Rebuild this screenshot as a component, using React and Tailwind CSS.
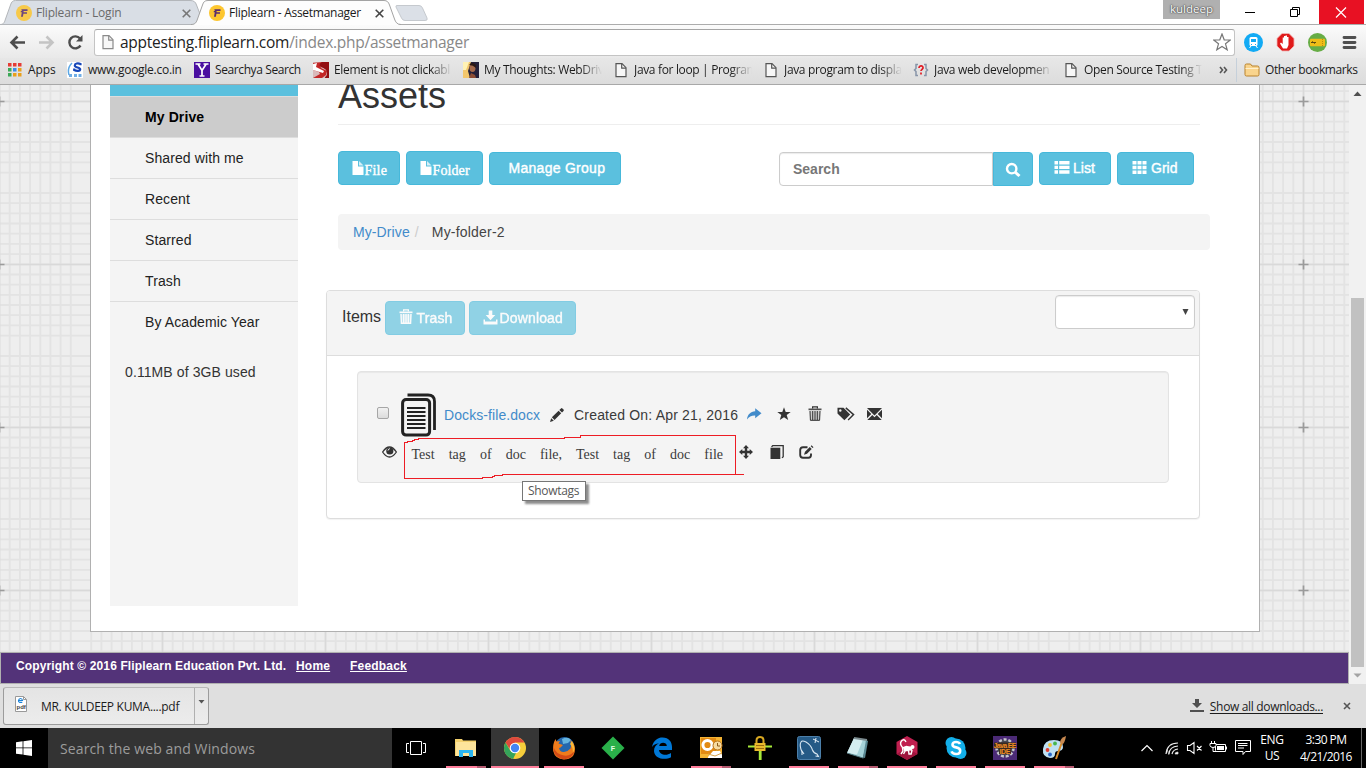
import React from "react";

/* ---------- browser chrome icons ---------- */

function Favicon({ className = "" }) {
  return (
    <svg className={"shrink-0 " + className} width="16" height="16" viewBox="0 0 16 16">
      <circle cx="8" cy="8" r="8" fill="#fdc62f" />
      <path d="M5.300 4.200h6.200v1.800H7.600v1.300H11v1.500H7.400l-.5 2.900H5l.8-4.400H4.600l.3-1.300h1z" fill="#5b2d6e" />
    </svg>
  );
}

function TabClose({ color = "#777" }) {
  return (
    <svg width="9" height="9" viewBox="0 0 9 9" className="shrink-0">
      <path d="M.7.7l7.600 7.600M8.300.7L.7 8.300" stroke={color} strokeWidth="1.600" />
    </svg>
  );
}

function PageIcon({ stroke = "#555" }) {
  return (
    <svg width="16" height="16" viewBox="0 0 16 16" className="shrink-0">
      <path d="M3 1.700h6l4 4v9H3z" fill="#f7f7f7" stroke={stroke} strokeWidth="1.200" />
      <path d="M8.700 1.700v4.400h4.300" fill="none" stroke={stroke} strokeWidth="1.200" />
    </svg>
  );
}

function TabStrip() {
  return (
    <div className="relative flex h-[25px] w-full items-start bg-white">
      <svg className="absolute left-0 top-0" width="1366" height="25" viewBox="0 0 1366 25">
        <path d="M0 24.5H1366" stroke="#acacac" />
        <path d="M0 24.5C4 24.5 4.500 22 5.500 19L10.500 5C11.500 2 12.500.5 15.500.5H190C194 .5 195.500 2 196.500 5L204 24.500z" fill="#d9dee5" stroke="#b3b6ba" />
        <path d="M191 25C195.500 24.500 196.500 22 197.500 19L202.500 5C203.500 2 204.500.5 208 .5H384C387 .5 388.500 2 389.500 5L394.500 19C395.500 22 397 24.500 401 25z" fill="#fdfdfd" />
        <path d="M191 24.500C195.500 24.500 196.500 22 197.500 19L202.500 5C203.500 2 204.500.5 208 .5H384C387 .5 388.500 2 389.500 5L394.500 19C395.500 22 397 24.500 401 24.500" fill="none" stroke="#a3a3a3" />
        <path d="M397 5.500H419Q421.500 5.500 422.500 8L427 18Q428 20.500 425 20.500H405Q402.500 20.500 401.500 18L396 7Q395.500 5.500 397 5.500z" fill="#dbe0e7" stroke="#c5c9ce" />
      </svg>
      <div className="relative flex h-6 w-[193px] items-center pl-4 pt-[2px]">
        <Favicon className="opacity-85" />
        <span className="ml-1 w-[146px] text-[12px] tracking-[-0.200px] text-[#6a6a6a]">Fliplearn - Login</span>
        <TabClose />
      </div>
      <div className="relative flex h-6 w-[200px] items-center pl-4 pt-[2px]">
        <Favicon />
        <span className="ml-1 w-[146px] text-[12px] tracking-[-0.270px] text-[#1a1a1a]">Fliplearn - Assetmanager</span>
        <TabClose color="#444" />
      </div>
      <div className="relative ml-auto flex h-6 items-start">
        <div className="mr-[10px] h-[19px] w-[57px] bg-[#b0b0b0] text-center text-[11.500px] leading-[17px] text-white [text-shadow:0_0_2px_#333,0_0_1px_#333]">
          kuldeep
        </div>
        <svg width="136" height="24" viewBox="0 0 136 24">
          <path d="M89 0h45v24H89z" fill="#e81123" />
          <path d="M15 12.500h10" stroke="#000" />
          <path d="M60.500 9.500h7v7h-7zM62.500 9.500v-2h7v7h-2" fill="none" stroke="#000" />
          <path d="M106 7.500l10 10M116 7.500l-10 10" stroke="#fff" strokeWidth="1.200" />
        </svg>
      </div>
    </div>
  );
}

function Toolbar() {
  return (
    <div className="flex h-[33px] w-full items-center bg-linear-to-b from-[#fbfbfb] to-[#e9e9e9]">
      <svg width="94" height="33" viewBox="0 0 94 33" className="shrink-0">
        <path d="M25 17.500H12M17.500 11.500l-6 6 6 6" fill="none" stroke="#4d4d4d" strokeWidth="2.600" />
        <path d="M39 17.500h13M46.500 11.500l6 6-6 6" fill="none" stroke="#c4c4c4" strokeWidth="2.600" />
        <path d="M80.500 20.500a6 6 0 1 1-.5-7" fill="none" stroke="#4d4d4d" strokeWidth="2.400" />
        <path d="M82.500 10v6.500H76z" fill="#4d4d4d" />
      </svg>
      <div className="mt-px flex h-[27px] w-[1141px] items-center rounded-[3px] border border-[#c4c4c4] border-t-[#a5a5a5] bg-white pl-[5px] pr-1">
        <PageIcon stroke="#8a8a8a" />
        <span className="ml-1 pt-px text-[15.500px] tracking-[-0.260px] text-[#222]">
          apptesting.fliplearn.com<span className="text-[#888]">/index.php/assetmanager</span>
        </span>
        <svg className="ml-auto mr-[-1px]" width="18" height="18" viewBox="0 0 18 18">
          <path d="M9 1l2.200 5.800 6.100.2-4.800 3.800 1.700 6L9 13.400l-5.200 3.400 1.700-6L.7 7l6.100-.2z" fill="#fff" stroke="#777" strokeWidth="1.200" />
        </svg>
      </div>
      <svg width="131" height="33" viewBox="0 0 131 33" className="shrink-0">
        <circle cx="18.500" cy="17.500" r="9.500" fill="#12aaf4" />
        <rect x="14.500" y="12" width="8" height="9" rx="1.500" fill="#fff" />
        <path d="M16 14h5v3h-5z" fill="#12aaf4" />
        <path d="M16 19.500h1M20 19.500h1" stroke="#12aaf4" />
        <path d="M16 21l-1.500 2M21 21l1.500 2" stroke="#fff" />
        <path d="M47 8.500h7l5 5v7.500l-5 5h-7l-5-5v-7.500z" fill="#e01b1b" stroke="#f3b5b5" strokeWidth=".8" />
        <path d="M48 23.500l-3-5 1-1 1.700 1.500V12.500h1.300V17v-6h1.500v6-6.500h1.500V17v-5h1.500v8l-1.500 3.500z" fill="#fff" />
        <circle cx="82.500" cy="17.500" r="9.500" fill="#67ad46" />
        <rect x="75" y="13.800" width="15" height="7.500" rx="1" fill="#f0bd17" />
        <path d="M76 17.500h5M77 16.500l3 2" stroke="#5a4a10" />
        <path d="M87.500 14v7" stroke="#b88d10" strokeDasharray="1 1" />
        <path d="M109 12.500h11M109 17.500h11M109 22.500h11" stroke="#505050" strokeWidth="2.800" strokeLinecap="round" />
      </svg>
    </div>
  );
}

function Bookmark({ icon, label, className }) {
  return (
    <div className={"flex shrink-0 items-center " + className}>
      {icon}
      <span className="ml-[5px] w-[118px] whitespace-nowrap [mask-image:linear-gradient(to_right,black_82%,transparent_100%)]">{label}</span>
    </div>
  );
}

function BookmarksBar() {
  const cols = ["#e53c35", "#e53c35", "#e53c35", "#3ba856", "#3b8de8", "#e9a01b", "#3ba856", "#e9a01b", "#e9a01b"];
  return (
    <div className="flex h-[27px] w-full items-center border-b border-[#a8a8a8] bg-linear-to-b from-[#e7e7e7] to-[#dcdcdc] pb-[2px] text-[12px] tracking-[-0.340px] text-[#1c1c1c]">
      <svg width="14" height="14" viewBox="0 0 14 14" className="ml-2 shrink-0">
        {cols.map((c, i) => (
          <rect key={i} x={(i % 3) * 5} y={Math.floor(i / 3) * 5} width="3.500" height="3.500" fill={c} />
        ))}
      </svg>
      <span className="ml-[6px] w-[39px] shrink-0 tracking-[-0.100px]">Apps</span>
      <div className="flex w-[127px] shrink-0 items-center">
        <svg width="16" height="16" viewBox="0 0 16 16" className="shrink-0">
          <path d="M0 0h16v16H0z" fill="#fff" />
          <path d="M5 1C2 4 .5 8 2 13" fill="none" stroke="#5ba7e5" strokeWidth="1.500" />
          <path d="M13.500 3.200V2C11 .8 7.800 1.400 7.800 3.500c0 2.500 5.400 1.600 5.400 3.800 0 2-3.700 2-6 .7V6.500" fill="none" stroke="#1646b8" strokeWidth="2.200" />
          <path d="M2 12h3v3H2zM7 12h3v3H7zM11.500 12h3v3h-3z" fill="#70aee6" />
        </svg>
        <span className="ml-[5px] whitespace-nowrap tracking-[-0.270px]">www.google.co.in</span>
      </div>
      <div className="flex w-[119px] shrink-0 items-center">
        <svg width="16" height="16" viewBox="0 0 16 16" className="shrink-0">
          <path d="M0 0h16v16H0z" fill="#4a0fa0" />
          <path d="M1.500 2h5M9.500 2h5M4 2l4 6.500L12.200 2M8 8v5.500M5.500 14h5" fill="none" stroke="#fff" strokeWidth="1.700" />
        </svg>
        <span className="ml-[5px] whitespace-nowrap tracking-[-0.400px]">Searchya Search</span>
      </div>
      <Bookmark
        className="w-[150px]"
        label="Element is not clickabl"
        icon={
          <svg width="16" height="16" viewBox="0 0 16 16" className="shrink-0">
            <path d="M0 0h16v16H0z" fill="#d9b9b9" />
            <path d="M0 1l10-1-3 3 1 3 6 3-1 4-4 3H0l7-4-1-2-6-2z" fill="#c32626" />
            <path d="M16 0H9C6 2 6 4 8 5s6 2 6 6-2 3-2 5h4z" fill="#930f12" />
            <path d="M0 2l4-1-1 4 8 4-1 2-10-3z" fill="#fff" />
          </svg>
        }
      />
      <Bookmark
        className="w-[150px]"
        label="My Thoughts: WebDriv"
        icon={
          <svg width="16" height="16" viewBox="0 0 16 16" className="shrink-0">
            <path d="M0 0h16v16H0z" fill="#24203a" />
            <path d="M0 0h8L5 9l2 7H0z" fill="#f2c66c" />
            <path d="M0 0h6L3 8H0z" fill="#fff2b5" />
            <ellipse cx="9.500" cy="6" rx="3" ry="4" fill="#a66a4c" />
            <path d="M6 3q3-4 7 0v3q-3-3-7-3z" fill="#2a1715" />
            <path d="M6 16l2-5 4 2 1 3z" fill="#8d4d35" />
          </svg>
        }
      />
      <Bookmark className="w-[150px]" label="Java for loop | Program" icon={<PageIcon />} />
      <Bookmark className="w-[150px]" label="Java program to displa" icon={<PageIcon />} />
      <Bookmark
        className="w-[150px]"
        label="Java web developmen"
        icon={
          <svg width="16" height="16" viewBox="0 0 16 16" className="shrink-0">
            <path d="M5 2.500H3v4L1.500 8 3 9.500v4h2M11 2.500h2v4L14.500 8 13 9.500v4h-2" fill="none" stroke="#8794a8" strokeWidth="1.500" />
            <path d="M6 6c0-3 4.500-2.500 4 0-.2 1.200-2 1.500-2 3M8 10.500v2" fill="none" stroke="#e01b24" strokeWidth="1.700" />
          </svg>
        }
      />
      <Bookmark className="w-[155px]" label="Open Source Testing T" icon={<PageIcon />} />
      <svg width="18" height="16" viewBox="0 0 18 16" className="shrink-0">
        <path d="M2 5l2.500 3L2 11M6 5l2.500 3L6 11" fill="none" stroke="#555" strokeWidth="1.600" />
      </svg>
      <div className="h-6 w-px bg-[#c6d0da]" />
      <svg width="16" height="16" viewBox="0 0 16 16" className="ml-[7px] shrink-0">
        <path d="M1 3.500q0-1.500 1.500-1.500h4L8 4h5.500Q15 4 15 5.500v7q0 1.500-1.500 1.500h-11Q1 14 1 12.500z" fill="#f9d48d" stroke="#b9822c" />
        <path d="M1.500 6.500h13" stroke="#fff0cc" />
      </svg>
      <span className="ml-[5px] whitespace-nowrap tracking-[-0.400px]">Other bookmarks</span>
    </div>
  );
}

/* ---------- page ---------- */

function PaperBackground() {
  const minor = Array.from({ length: 15 }, (_, i) => (i + 1) * 10.1875);
  return (
    <svg className="absolute left-0 top-0" width="1349" height="567" viewBox="0 0 1349 567">
      <defs>
        <pattern id="paper" width="163" height="163" patternUnits="userSpaceOnUse" x="-82" y="-66">
          <path d="M0 0h163v163H0z" fill="#eeeeee" />
          {minor.map((p) => (
            <path key={p} d={`M0 ${(p + 0.8).toFixed(1)}H163M${p.toFixed(1)} 0V163`} stroke="#e3e3e3" strokeWidth="1.800" />
          ))}
          <path d="M81.500 0V163M0 82.500H163" stroke="#d9d9d9" strokeWidth="1.500" />
          <path d="M81.500 77.500v10M76.500 82.500h10" stroke="#9b9b9b" strokeWidth="1.700" />
        </pattern>
      </defs>
      <path d="M0 0h1349v567H0z" fill="url(#paper)" />
    </svg>
  );
}

function Sidebar() {
  const items = ["Shared with me", "Recent", "Starred", "Trash"];
  return (
    <nav className="flex h-[521px] w-[188px] shrink-0 flex-col bg-[#f4f4f4] text-[14px] tracking-[0.100px] text-[#222]">
      <div className="h-3 border-b border-[#ddd] bg-[#5bc0de]" />
      <div className="flex h-[41px] items-center border-b border-[#ddd] bg-[#ccc] pl-[35px] font-bold text-black">My Drive</div>
      {items.map((t) => (
        <div key={t} className="flex h-[41px] items-center border-b border-[#ddd] pl-[35px]">{t}</div>
      ))}
      <div className="flex h-[41px] items-center pl-[35px]">By Academic Year</div>
      <div className="mt-[19px] pl-[15px] leading-5 text-[#333]">0.11MB of 3GB used</div>
    </nav>
  );
}

const btn = "flex shrink-0 items-center rounded-[4px] border border-[#46b8da] bg-[#5bc0de] text-[14px] text-white [-webkit-text-stroke:0.400px_white] ";

function FileGlyph() {
  return (
    <svg width="12" height="14" viewBox="0 0 12 14" className="mt-[-1px] shrink-0">
      <path d="M.5 0H6v5.500h5.500V14H.5z" fill="#fff" />
      <path d="M7 0l4.500 4.500H7z" fill="#fff" opacity=".75" />
    </svg>
  );
}

function ActionRow() {
  return (
    <div className="ml-3 mt-[26px] flex h-[35px] items-end">
      <button className={btn + "h-[34px] w-[62px] self-start pl-[13px] font-['Liberation_Serif',serif] pt-px"}>
        <FileGlyph />
        <span className="ml-[0.500px] mt-1 tracking-[0.200px]">File</span>
      </button>
      <button className={btn + "ml-[6px] h-[34px] w-[77px] self-start pl-[13px] font-['Liberation_Serif',serif] pt-px"}>
        <FileGlyph />
        <span className="ml-[0.500px] mt-1 tracking-[0.100px]">Folder</span>
      </button>
      <button className={btn + "mb-px ml-[6px] h-[33px] w-[132px] pl-[18.500px] tracking-[0.280px]"}>Manage Group</button>
      <div className="ml-[158px] flex h-[34px] w-[214px] items-center rounded-l-[4px] border border-[#ccc] bg-white pl-[13px] text-[14px] font-bold text-[#777] shadow-[inset_0_1px_1px_rgba(0,0,0,0.080)]">
        Search
      </div>
      <button className="flex h-[34px] w-10 items-center justify-center rounded-r-[4px] border border-[#46b8da] bg-[#5bc0de] pr-px pt-px">
        <svg width="16" height="16" viewBox="0 0 16 16">
          <circle cx="6.700" cy="6.700" r="4.700" fill="none" stroke="#fff" strokeWidth="2.400" />
          <path d="M10 10l4.500 4" stroke="#fff" strokeWidth="3" />
        </svg>
      </button>
      <button className={btn + "mb-px ml-[6px] h-[33px] w-[72px] pl-[14px]"}>
        <svg width="16" height="13" viewBox="0 0 16 13" className="mr-[3px] mt-[-2px] shrink-0">
          <path d="M.5 0H4v3.500H.5zM.5 4.700H4v3.300H.5zM.5 9.200H4v3.500H.5zM5.200 0h10.300v3.500H5.200zM5.200 4.700h10.300v3.300H5.200zM5.200 9.200h10.300v3.500H5.200z" fill="#fff" />
        </svg>
        List
      </button>
      <button className={btn + "mb-px ml-[6px] h-[33px] w-[77px] pl-[14px]"}>
        <svg width="15" height="13" viewBox="0 0 15 13" className="mr-1 mt-[-2px] shrink-0">
          <path d="M.5 0h4v3.600h-4zM5.500 0h4v3.600h-4zM10.500 0h4v3.600h-4zM.5 4.700h4v3.600h-4zM5.500 4.700h4v3.600h-4zM10.500 4.700h4v3.600h-4zM.5 9.400h4V13h-4zM5.500 9.400h4V13h-4zM10.500 9.400h4V13h-4z" fill="#fff" />
        </svg>
        Grid
      </button>
    </div>
  );
}

function TrashGlyph({ color = "#333", bold = false }) {
  return (
    <svg width="14" height="15" viewBox="0 0 14 15" className="shrink-0">
      <path d="M4.600 2.500V.8h4.800v1.700" fill="none" stroke={color} strokeWidth="1.200" />
      <path d="M.5 2.500h13v1.700H.5z" fill={color} opacity={bold ? 1 : 0.85} />
      <path d="M1.700 5.200h10.600l-.5 9.500H2.200z" fill={color} opacity={bold ? 0.45 : 0.2} />
      <path d="M2 5l.4 9.300h9.200L12 5M4.700 5v9M7 5v9M9.300 5v9" fill="none" stroke={color} strokeWidth={bold ? 1.4 : 1} />
    </svg>
  );
}

function ItemCard() {
  return (
    <div className="relative mx-[30px] mt-[15px] h-[112px] rounded-[4px] border border-[#e3e3e3] bg-[#f4f4f4] text-[14px] text-[#3a3a3a] shadow-[inset_0_1px_1px_rgba(0,0,0,0.050)]">
      <div className="mt-[20px] flex h-[46px] items-center pl-[19px]">
        <span className="mt-[-4px] h-3 w-3 shrink-0 rounded-[2px] border border-[#a6a6a6] bg-linear-to-b from-[#f1f1f1] to-[#dcdcdc]" />
        <svg width="36" height="44" viewBox="0 0 36 44" className="ml-3 shrink-0">
          <path d="M6.500 2H27Q33.500 2 33.500 8.500V37" fill="none" stroke="#222" strokeWidth="2.800" />
          <rect x="1.600" y="6.600" width="27" height="35.500" rx="3.500" fill="#f4f4f4" stroke="#222" strokeWidth="3" />
          <path d="M6 15h18.500M6 19h18.500M6 23h18.500M6 27h18.500M6 31h18.500M6 35h18.500" stroke="#222" strokeWidth="1.900" />
        </svg>
        <a className="ml-[7px] w-[105px] shrink-0 tracking-[0.080px] text-[#428bca]">Docks-file.docx</a>
        <svg width="16" height="15" viewBox="0 0 16 15" className="shrink-0">
          <path d="M1 14l1.200-3.800 2.600 2.600zM2.900 9.300l6.700-6.600 2.600 2.600-6.700 6.700zM10.300 2L12 .4q.7-.6 1.400 0l1.100 1.200q.7.700 0 1.400L13 4.600z" fill="#333" />
        </svg>
        <span className="ml-[9px] w-[173px] shrink-0 tracking-[0.190px]">Created On: Apr 21, 2016</span>
        <div className="mt-[-3px] flex items-center">
          <svg width="16" height="14" viewBox="0 0 16 14" className="ml-[-1px]">
            <path d="M9.200 1.200L15.500 6.200 9.200 11.200V8.400C5.500 8.300 3 9.300 1 12.400 1.400 7.500 4.500 4.500 9.200 4.200z" fill="#428bca" />
          </svg>
          <svg width="14" height="14" viewBox="0 0 14 14" className="ml-[15px]">
            <path d="M7 .3l1.700 4.800h5l-4 3 1.500 5L7 10.200 2.800 13.100l1.500-5-4-3h5z" fill="#333" />
          </svg>
          <span className="ml-[17px]"><TrashGlyph /></span>
          <svg width="18" height="14" viewBox="0 0 18 14" className="ml-[15px]">
            <path d="M.5.8h6L13.200 7.500 7.400 13.300.5 6.500z" fill="#333" />
            <circle cx="3.300" cy="3.500" r="1.200" fill="#f4f4f4" />
            <path d="M8.800.9l7.800 6.700-5.500 5.500" fill="none" stroke="#333" strokeWidth="1.400" />
          </svg>
          <svg width="15" height="12" viewBox="0 0 15 12" className="ml-[12px]">
            <path d="M0 0h15L7.500 7.500zM0 1.700L4.300 6 0 10.300zM15 1.700L10.700 6 15 10.300zM5.300 7l2.200 2.200L9.700 7l5 5H.3z" fill="#333" />
          </svg>
        </div>
      </div>
      <div className="flex h-[34px] items-center pl-[24px]">
        <svg width="15" height="12" viewBox="0 0 15 12" className="mt-[-7px] shrink-0">
          <path d="M.6 6Q4 1 7.500 1T14.400 6Q11 11 7.500 11T.6 6z" fill="none" stroke="#333" strokeWidth="1.300" />
          <circle cx="7.800" cy="5" r="3.600" fill="#333" />
          <path d="M6 4.500q.2-1.600 1.800-1.800" fill="none" stroke="#fff" />
        </svg>
        <p className="ml-[14.500px] mt-[-1px] w-[311.500px] shrink-0 font-['Liberation_Serif',serif] [text-align-last:justify]">
          Test tag of doc file, Test tag of doc file
        </p>
        <div className="mt-[-7px] flex items-center">
          <svg width="14" height="14" viewBox="0 0 14 14" className="ml-4">
            <path d="M7 0l3 3.300H8.200v2.500h2.500V4L14 7l-3.300 3V8.200H8.200v2.500H10L7 14l-3-3.300h1.800V8.200H3.300V10L0 7l3.300-3v1.800h2.500V3.300H4z" fill="#333" />
          </svg>
          <svg width="14" height="14" viewBox="0 0 14 14" className="ml-[17px]">
            <path d="M.5 2.700h9.800V14H.5z" fill="#333" />
            <path d="M1.500 1.900L2.700.7h10.500v11l-1.200 1.200" fill="none" stroke="#333" strokeWidth="1.300" />
          </svg>
          <svg width="15" height="14" viewBox="0 0 15 14" className="ml-[15px]">
            <path d="M8.500 2.200H4Q1.200 2.200 1.200 5v5q0 2.700 2.800 2.700h5.500q2.500 0 2.500-2.700V8.500" fill="none" stroke="#333" strokeWidth="1.900" />
            <path d="M5 9.700L6 6.800l4.800-4.700 1.900 1.900L8 8.700zM11.700 1.200l.9-.9 1.900 1.900-.9.900z" fill="#333" />
          </svg>
        </div>
      </div>
      <svg className="absolute left-[46px] top-[62px]" width="342" height="48" viewBox="404 434 342 48" shapeRendering="crispEdges">
        <path d="M404.500 478.500V442.500H407.500V441.500H412.500V440.500H414.500V439.500H418.500V438.500H564.500V437.500H580.500V435.500H735.500V474.500M404 478.500H482.500V477.500H492.500V476.500H494.500V475.500H502.500V474.500H744" fill="none" stroke="#ed1c24" />
      </svg>
      <div className="absolute left-[164px] top-[109px] h-5 w-16 border border-[#767676] bg-white pl-[5px] font-['Open_Sans',sans-serif] text-[12px] leading-[18px] tracking-[-0.320px] text-[#575757] shadow-[3px_3px_2px_rgba(0,0,0,0.450)]">
        Showtags
      </div>
    </div>
  );
}

function ItemsPanel() {
  return (
    <section className="mt-10 h-[229px] w-[874px] rounded-[4px] border border-[#ddd] bg-white shadow-[0_1px_1px_rgba(0,0,0,0.050)]">
      <header className="flex h-[65px] items-start rounded-t-[3px] border-b border-[#ddd] bg-[#f4f4f4] pl-[15px]">
        <span className="mt-[14px] w-[43px] text-[16px] leading-6 text-[#333]">Items</span>
        <button className={btn + "mt-[10px] h-[34px] w-20 pl-[12.500px] opacity-65"}>
          <span className="mt-[-3px]"><TrashGlyph color="#fff" bold /></span>
          <span className="ml-[4px] tracking-[0.150px]">Trash</span>
        </button>
        <button className={btn + "ml-1 mt-[10px] h-[34px] w-[107px] pl-[13px] opacity-65"}>
          <svg width="15" height="15" viewBox="0 0 15 15" className="mt-[-2px] shrink-0">
            <path d="M5.700.5h3.600V5h3L7.500 10.200 2.700 5h3z" fill="#fff" />
            <path d="M.5 9.500H2v2h11v-2h1.500v5H.5z" fill="#fff" />
          </svg>
          <span className="ml-[1.500px] tracking-[0.150px]">Download</span>
        </button>
        <div className="ml-auto mr-1 mt-1 flex h-[34px] w-[140px] items-center justify-end rounded-[4px] border border-[#ccc] bg-white pr-[5px] shadow-[inset_0_1px_1px_rgba(0,0,0,0.080)]">
          <svg width="7" height="6" viewBox="0 0 7 6">
            <path d="M.5 0h6l-3 6z" fill="#444" />
          </svg>
        </div>
      </header>
      <ItemCard />
    </section>
  );
}

function Page() {
  return (
    <div className="relative flex h-[599px] w-[1349px] flex-col overflow-hidden bg-[#eee] font-['Liberation_Sans',Arial,sans-serif]">
      <PaperBackground />
      <main className="relative ml-[90px] flex h-[547px] w-[1170px] shrink-0 overflow-hidden border border-t-0 border-[#b0b0b0] bg-white pl-[19px]">
        <Sidebar />
        <div className="flex flex-1 flex-col pl-7">
          <div className="ml-3 h-10 w-[862px] border-b border-[#eee]">
            <h1 className="mt-[-7px] text-[36px] leading-9 text-[#333]">Assets</h1>
          </div>
          <ActionRow />
          <div className="ml-3 mt-7 flex h-9 w-[872px] items-center rounded-[4px] bg-[#f4f4f4] pl-[15px] text-[14px] tracking-[0.100px] text-[#444]">
            <a className="text-[#428bca]">My-Drive</a>
            <span className="ml-[5px] text-[#ccc]">/</span>
            <span className="ml-[13px] tracking-[0.200px]">My-folder-2</span>
          </div>
          <ItemsPanel />
        </div>
      </main>
      <footer className="relative mt-5 flex h-8 items-start border border-[#b0b0b0] bg-[#533379] pl-[15px] pt-[5px] text-[12px] font-bold leading-[16px] text-white">
        <span className="w-[280px] tracking-[0.130px]">Copyright © 2016 Fliplearn Education Pvt. Ltd.</span>
        <a className="w-[54px] tracking-[0.200px] underline">Home</a>
        <a className="tracking-[0.200px] underline">Feedback</a>
      </footer>
    </div>
  );
}

function Scrollbar() {
  return (
    <div className="flex h-[599px] w-[17px] flex-col items-center bg-[#f1f1f1]">
      <svg width="17" height="17" viewBox="0 0 17 17">
        <path d="M8.500 6.500l4 4.500h-8z" fill="#505050" />
      </svg>
      <div className="mt-[196px] h-[369px] w-[13px] bg-[#c1c1c1]" />
      <svg width="17" height="17" viewBox="0 0 17 17">
        <path d="M8.500 10.500l4-4h-8z" fill="#a3a3a3" />
      </svg>
    </div>
  );
}

function DownloadBar() {
  return (
    <div className="flex h-11 w-full items-start bg-[#dfdfdf] text-[12px] text-[#1c1c1c]">
      <div className="ml-[3px] mt-[3px] flex h-[38px] w-[206px] rounded-[3px] border border-[#9c9c9c] border-t-[#b8b8b8] bg-linear-to-b from-[#e4e4e4] to-[#ececec]">
        <div className="flex flex-1 items-center border-r border-[#b0b0b0] pl-[9px]">
          <svg width="16" height="16" viewBox="0 0 16 16" className="mt-[-4px] shrink-0">
            <path d="M2.500.5h8l3 3v12h-11z" fill="#fff" stroke="#999" />
            <path d="M10.500.5v3h3" fill="none" stroke="#999" />
            <path d="M5.500 4.500h4q-.3-2-2-2t-2 2.200 3.800 1.600" fill="none" stroke="#1b83d8" strokeWidth="1.200" />
            <text x="3.500" y="13" fontSize="6" fontWeight="700" fill="#444" fontFamily="Liberation Sans">pdf</text>
          </svg>
          <span className="ml-3 mt-px whitespace-nowrap tracking-[-0.300px]">MR. KULDEEP KUMA....pdf</span>
        </div>
        <svg width="13" height="36" viewBox="0 0 13 36">
          <path d="M3.500 12h6l-3 3.500z" fill="#555" />
        </svg>
      </div>
      <div className="ml-auto flex h-11 items-center pr-[15px]">
        <svg width="14" height="14" viewBox="0 0 14 14">
          <path d="M5 0h4v4h3L7 9 2 4h3zM0 11h14v2H0z" fill="#505050" />
        </svg>
        <span className="ml-[6px] mr-[20px] mt-px tracking-[-0.330px] underline decoration-1 underline-offset-2">Show all downloads...</span>
        <svg width="8" height="8" viewBox="0 0 8 8">
          <path d="M1 1l6 6M7 1L1 7" stroke="#555" strokeWidth="1.600" />
        </svg>
      </div>
    </div>
  );
}

/* ---------- taskbar ---------- */

function TaskApp({ children, state = "none" }) {
  return (
    <div className={"mr-px flex h-10 w-12 shrink-0 flex-col items-center " + (state === "active" ? "bg-[#363636]" : "")}>
      <svg width="24" height="24" viewBox="0 0 24 24" className="mb-[6px] mt-2">{children}</svg>
      {state === "active" && <div className="h-[2px] w-12 bg-[#ff7e9b]" />}
      {state === "open" && <div className="h-[2px] w-10 bg-[#ff7e9b]" />}
      {state === "multi" && (
        <div className="flex h-[2px] w-10">
          <div className="w-[31px] bg-[#ff7e9b]" />
          <div className="flex-1 bg-[#b45a70]" />
        </div>
      )}
    </div>
  );
}

function Taskbar() {
  return (
    <div className="flex h-10 w-full items-center bg-black font-['Open_Sans',sans-serif] text-white">
      <div className="flex h-10 w-12 shrink-0 items-center justify-center">
        <svg width="16" height="16" viewBox="0 0 16 16">
          <path d="M0 2.200L6.600 1.300v6.200H0zM7.400 1.200L16 0v7.500H7.400zM0 8.300h6.600v6.300L0 13.700zM7.400 8.300H16V16l-8.600-1.200z" fill="#fff" />
        </svg>
      </div>
      <div className="flex h-10 w-[344px] shrink-0 items-center bg-[#333] pl-3 pt-px text-[14px] tracking-[0.110px] text-[#9c9c9c]">Search the web and Windows</div>
      <div className="flex h-10 w-[50px] shrink-0 items-center pl-[14px]">
        <svg width="20" height="14" viewBox="0 0 20 14">
          <path d="M4.500.5h11v13h-11zM3 2.500H.5v9H3M17 2.500h2.500v9H17" fill="none" stroke="#fff" />
        </svg>
      </div>
      <TaskApp state="multi">
        <path d="M1 3h7l1 1.500h13V20H1z" fill="#f4d16d" />
        <path d="M2 6h20v14H2z" fill="#fde49b" />
        <path d="M5 21v-7h14v7h-4v-4H9v4z" fill="#2bb5f0" />
      </TaskApp>
      <TaskApp state="active">
        <circle cx="12" cy="12" r="11" fill="#f6cd3b" />
        <path d="M2.500 6.500A11 11 0 0 1 21.500 6.500H12L8 15z" fill="#dd4a3e" />
        <path d="M2.500 6.500L7.500 15l5.500 2-3 5.900A11 11 0 0 1 2.500 6.500z" fill="#35a35a" />
        <circle cx="12" cy="12" r="5.300" fill="#fff" />
        <circle cx="12" cy="12" r="4.200" fill="#4285f4" />
      </TaskApp>
      <TaskApp state="open">
        <circle cx="12.500" cy="11" r="10" fill="#2467ae" />
        <path d="M10 3q6-3 9 1l-3 3-5 1z" fill="#65b4df" />
        <path d="M3.500 3l1 2.500L8 5 6.500 7.500 11 9 8.500 11.500l-1.500.5Q8 16.500 12 16t6.500-3.500Q20 8 18 4q5 3.500 5 9 0 10-11 10.500Q3 23 1.200 15 .5 8 3.500 3z" fill="#ef7c1c" />
        <path d="M1.500 11Q1 20 10 23q10 1.500 13-9-4 6.500-11 5.500Q4 18.500 1.500 11z" fill="#d44a16" />
        <path d="M20 5q4 7 1 12 0-6-3-9z" fill="#fbb936" />
      </TaskApp>
      <TaskApp>
        <path d="M12 .5L23.500 12 12 23.500.5 12z" fill="#2ab04a" />
        <text x="9.800" y="14.500" fontSize="7" fontWeight="700" fill="#e8ffe8" fontFamily="Liberation Sans">F</text>
      </TaskApp>
      <TaskApp>
        <path d="M2 11C3.500 4 8 1.500 12.500 1.500 19 1.500 22 6 22 11v3H9c.2 4.500 7 6.500 12 3v4.300C15 24.500 4.500 23 4 15c0-4 2-6.500 5-7.500C5.500 7.500 3.500 9 2 11zM9.200 10h7.600c0-4-7-4.500-7.600 0z" fill="#0078d7" />
      </TaskApp>
      <TaskApp state="multi">
        <path d="M1 1h22v21H1z" fill="#f4b434" />
        <path d="M2 2h15v16H2z" fill="#e28a13" />
        <circle cx="8.500" cy="9" r="4.600" fill="none" stroke="#fff" strokeWidth="3" />
        <circle cx="18.500" cy="9.500" r="4.500" fill="#f7dba0" stroke="#b3701c" />
        <path d="M18.500 7v3h2.500" fill="none" stroke="#8a5a1a" />
        <path d="M9 21l5-6h7l2 4v3H9z" fill="#fff" />
        <path d="M9 18l7 2 7-3" fill="none" stroke="#d7a24a" />
      </TaskApp>
      <TaskApp>
        <path d="M0 9.500h7v2H0zM17 9.500h7v2h-7zM10.800 15h2.800v9h-2.800z" fill="#a7e93a" />
        <path d="M8.500 8V4.500q0-3.500 3.500-3.500t3.500 3.500V8" fill="none" stroke="#d9a821" strokeWidth="2" />
        <rect x="6.500" y="7" width="11" height="8" fill="#e9b92d" />
        <path d="M8 9.500h8M8 12.500h8" stroke="#9b6d10" />
      </TaskApp>
      <TaskApp state="open">
        <rect x=".5" y=".5" width="23" height="23" rx="2" fill="#255a86" stroke="#4c7fa9" />
        <path d="M7 18l-2-3 0 4M5 16Q2 9 4 6q1-2 5 0 5 3 6.500 8 1 3 4.500 4l1.500 2.500-3-.5" fill="none" stroke="#d8e6f1" strokeWidth="1.100" />
        <path d="M16 3l6 3M19 2l-1 5" stroke="#e5eff7" />
      </TaskApp>
      <TaskApp state="multi">
        <path d="M8 2l13 2-4 18-16-5z" fill="#a5d2d8" />
        <path d="M8 2l9 1.500-6 15L1 17z" fill="#d4edf0" />
        <path d="M20 4l2 1-3 17-2-1z" fill="#5b8a95" />
        <path d="M8 2l13 2" stroke="#7c8c90" strokeWidth="1.800" />
        <path d="M1 17l16 5 2-1" fill="none" stroke="#527880" />
      </TaskApp>
      <TaskApp state="open">
        <path d="M12 0l10.500 6v12L12 24 1.500 18V6z" fill="#c01f4f" />
        <path d="M12 12l10.500 6L12 24 1.500 18z" fill="#9f153d" />
        <path d="M6 18l2-3-.5-3 4-1.500 4 1 1.500 3-1 4M8.500 18l2-3.500h3l.5 3.500h2M8 12Q4 8 6.500 5T11 6" fill="none" stroke="#fff" strokeWidth="1.400" />
        <path d="M8 11l9-.5v4l-8 .5z" fill="#fff" />
        <circle cx="17.500" cy="11" r="2" fill="#fff" />
      </TaskApp>
      <TaskApp state="open">
        <circle cx="12" cy="12" r="9.500" fill="#13afe9" />
        <circle cx="7.500" cy="7" r="6" fill="#13afe9" />
        <circle cx="16.500" cy="17" r="6" fill="#13afe9" />
        <path d="M16 8q-1-2-4-2-3.500 0-3.500 2.700 0 2 3.700 2.700 4 .8 4 3.300 0 3.300-4.200 3.300-3.500 0-4.500-2.600" fill="none" stroke="#fff" strokeWidth="2.600" />
      </TaskApp>
      <TaskApp state="open">
        <path d="M0 0h24v24H0z" fill="#4b2a76" />
        <circle cx="12" cy="12" r="8.500" fill="#464650" stroke="#c7c7cc" strokeWidth="2.500" strokeDasharray="3 1.800" />
        <path d="M1 6.500h22v6H1zM6 12h12v6H6z" fill="#38291f" />
        <text x="0.500" y="12" fontSize="7" textLength="23" fontWeight="700" fill="#f08c25" fontFamily="Liberation Sans">Java EE</text>
        <text x="6.500" y="18" fontSize="7" textLength="11" fontWeight="700" fill="#f08c25" fontFamily="Liberation Sans">IDE</text>
      </TaskApp>
      <TaskApp state="multi">
        <path d="M1 13Q2 4 12 4q9 0 9 7 0 4-5 4-3 0-3 3 0 4-5 4Q0 21 1 13z" fill="#bfe0f3" />
        <circle cx="5.500" cy="14" r="1.900" fill="#e23d31" />
        <circle cx="8" cy="9" r="1.900" fill="#f4c430" />
        <circle cx="13" cy="7.500" r="1.900" fill="#45b64e" />
        <circle cx="8" cy="18.500" r="1.900" fill="#2865c5" />
        <path d="M20 6l-6 17" stroke="#d68b2b" strokeWidth="2" />
        <path d="M18 7q0-5 6-7-1 6-3 8z" fill="#c88950" />
      </TaskApp>
      <svg width="172" height="40" viewBox="0 0 172 40" className="shrink-0">
        <path d="M62.500 23l5.500-5.500 5.500 5.500" fill="none" stroke="#fff" strokeWidth="1.200" />
        <path d="M87 26Q88 15 99 15M90 26Q90.500 18.500 99 18M93 26Q94 21.500 99 21" fill="none" stroke="#eee" strokeWidth="1.200" />
        <path d="M96 26q0-2 3-2v2zM88 21l2 6" fill="#fff" stroke="#ddd" strokeWidth=".7" />
        <path d="M108.500 17.500h2.500l4-3v11l-4-3h-2.500zM118 18l4.500 4.500M122.500 18l-4.500 4.500" fill="none" stroke="#fff" strokeWidth="1.100" />
        <path d="M136.500 16.500h10v7h-10zM147.500 18.500v3" fill="none" stroke="#fff" />
        <path d="M138 18h7v4h-7z" fill="#fff" />
        <path d="M131 15.500h6v2q-.5 2-3 2t-3-2zM132.500 13v2M135.500 13v2M134 19v4.500h3" fill="#000" stroke="#fff" />
        <path d="M157 12.500h15v11h-5l-2.500 3v-3H157zM159.500 15.500h9.500M159.500 17.500h9.500M159.500 20h6" transform="translate(-.5 0)" fill="none" stroke="#fff" />
      </svg>
      <div className="ml-[0px] w-[42px] shrink-0 text-center text-[12px] leading-4 tracking-[-0.300px]">ENG<br />US</div>
      <div className="ml-px w-[64px] shrink-0 text-center text-[12px] leading-[17px] tracking-[-0.550px]">3:30 PM<br />4/21/2016</div>
      <div className="ml-auto mr-1 h-10 w-px bg-[#666]" />
    </div>
  );
}

export default function App() {
  return (
    <div className="flex h-[768px] w-[1366px] flex-col overflow-hidden bg-white font-['Open_Sans',sans-serif]">
      <TabStrip />
      <Toolbar />
      <BookmarksBar />
      <div className="flex">
        <Page />
        <Scrollbar />
      </div>
      <DownloadBar />
      <Taskbar />
    </div>
  );
}
